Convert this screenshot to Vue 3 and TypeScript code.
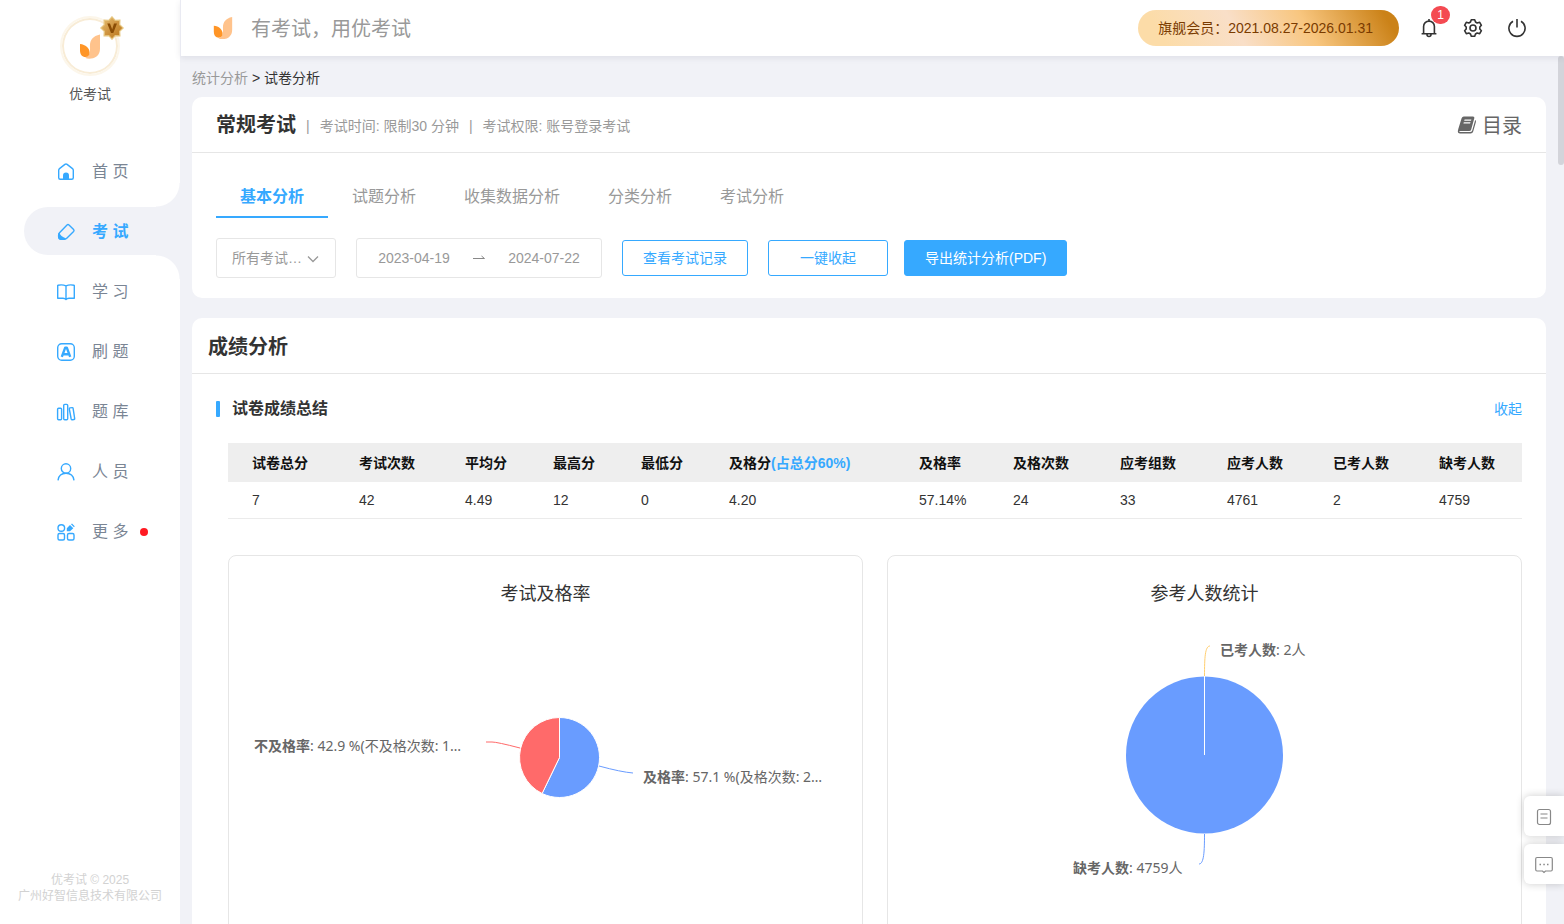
<script setup lang="ts">
import { ref } from 'vue'

interface NavItem {
  key: string
  label: string
  dot?: boolean
}

interface Column {
  title: string
  note?: string
  value: string
  width: number
}

const navItems: NavItem[] = [
  { key: 'home', label: '首 页' },
  { key: 'exam', label: '考 试' },
  { key: 'study', label: '学 习' },
  { key: 'practice', label: '刷 题' },
  { key: 'bank', label: '题 库' },
  { key: 'people', label: '人 员' },
  { key: 'more', label: '更 多', dot: true },
]
const activeNav = ref('exam')

const tabs = ['基本分析', '试题分析', '收集数据分析', '分类分析', '考试分析']
const activeTab = ref('基本分析')

const scope = ref('all')
const startDate = ref('2023-04-19')
const endDate = ref('2024-07-22')

const columns: Column[] = [
  { title: '试卷总分', value: '7', width: 107 },
  { title: '考试次数', value: '42', width: 106 },
  { title: '平均分', value: '4.49', width: 88 },
  { title: '最高分', value: '12', width: 88 },
  { title: '最低分', value: '0', width: 88 },
  { title: '及格分', note: '(占总分60%)', value: '4.20', width: 190 },
  { title: '及格率', value: '57.14%', width: 94 },
  { title: '及格次数', value: '24', width: 107 },
  { title: '应考组数', value: '33', width: 107 },
  { title: '应考人数', value: '4761', width: 106 },
  { title: '已考人数', value: '2', width: 106 },
  { title: '缺考人数', value: '4759', width: 107 },
]
</script>

<template>
  <div class="page">
    <aside class="sidebar">
      <div class="profile">
        <div class="avatar">
          <svg class="avatar-logo" viewBox="0 0 20 24" aria-hidden="true">
            <path d="M20 0C12.500 1.500 9.500 6 10 13C10.300 18 9 22 5 23.300C8 24.800 13 24.500 16.500 22C19 20 20 17.500 20 14Z" fill="#ffc38c" />
            <path d="M0 9.500C5.500 10 9.500 13.500 9.500 18C9.500 20.800 8 22.500 5.500 22.500C2 22.500 0 19.800 0 16Z" fill="#ff9526" />
          </svg>
          <svg class="medal" viewBox="0 0 24 24" aria-hidden="true">
            <defs>
              <linearGradient id="medalFill" x1="0" y1="0" x2="1" y2="1">
                <stop offset="0" stop-color="#e9c47a" />
                <stop offset="0.500" stop-color="#cf9440" />
                <stop offset="1" stop-color="#b87518" />
              </linearGradient>
            </defs>
            <path d="M12 .8L15.200 4.300L19.900 4.100L19.700 8.800L23.200 12L19.700 15.200L19.900 19.900L15.200 19.700L12 23.200L8.800 19.700L4.100 19.900L4.300 15.200L.8 12L4.300 8.800L4.100 4.100L8.800 4.300Z" fill="url(#medalFill)" stroke="#e6c680" stroke-width="1.200" />
            <path d="M7.300 7.500H10L12.200 13.500L14 7.500H17L13.300 17H11Z" fill="#8a4d05" />
          </svg>
        </div>
        <div class="profile-name">优考试</div>
      </div>

      <nav class="nav">
        <a
          v-for="item in navItems"
          :key="item.key"
          href="#"
          class="nav-item"
          :class="{ active: item.key === activeNav }"
          @click.prevent="activeNav = item.key"
        >
          <svg class="nav-icon" viewBox="0 0 20 20" aria-hidden="true">
            <template v-if="item.key === 'home'">
              <path d="M2.700 8.200Q2.700 7.200 3.500 6.600L8.900 2.400Q10 1.600 11.100 2.400L16.500 6.600Q17.300 7.200 17.300 8.200V15.800Q17.300 17.300 15.800 17.300H4.200Q2.700 17.300 2.700 15.800Z" />
              <path class="solid" d="M7 18V13.500A3 3 0 0 1 13 13.500V18Z" />
            </template>
            <template v-else-if="item.key === 'exam'">
              <path d="M11 2.900Q12 2 13 2.900L17.600 7.500Q18.500 8.500 17.600 9.500L10.500 16.500Q9.500 17.400 7.800 17.400H5.500Q2.700 17.400 2.600 14.500V13.500Q2.500 11.800 3.500 10.700Z" />
              <path class="solid" d="M3.300 10.500Q4.300 14.300 10.200 16.500L8.500 18H5Q2 17.500 2 14.500V12Z" />
            </template>
            <template v-else-if="item.key === 'study'">
              <path d="M10 3.800Q6.500 2.300 2 3.200Q1.700 3.200 1.700 3.600V16.200H7Q9 16.300 10 17.500Q11 16.300 13 16.200H18.300V3.600Q18.300 3.200 18 3.200Q13.500 2.300 10 3.800ZM10 3.800V17.500" />
            </template>
            <template v-else-if="item.key === 'practice'">
              <rect x="1.700" y="1.700" width="16.600" height="16.600" rx="4" />
              <path class="thick" d="M5.800 14.800L9.200 5.700H10.800L14.200 14.800M7 12.300H13" />
            </template>
            <template v-else-if="item.key === 'bank'">
              <rect x="1.600" y="6.200" width="4" height="11.500" rx="1" />
              <rect x="7.700" y="2.400" width="4" height="15.300" rx="1" />
              <path d="M14 5.900L16.200 5.600Q17 5.500 17.100 6.300L18.700 16.600Q18.800 17.400 18 17.500L16.300 17.700Q15.400 17.800 15.200 17L13.300 7Q13.200 6 14 5.900Z" />
            </template>
            <template v-else-if="item.key === 'people'">
              <circle cx="10" cy="6.500" r="4.700" />
              <path d="M2 18.300Q3 11.300 10 11.300T18 18.300" />
            </template>
            <template v-else>
              <circle cx="5.300" cy="6" r="3.300" />
              <rect x="2" y="11.500" width="6.500" height="6.500" rx="1.500" />
              <rect x="11.500" y="11.500" width="6.500" height="6.500" rx="1.500" />
              <path class="solid" d="M10.800 6.200L14 3L17.300 6.200L14 9.300H10.800ZM15 2.200L16 1.500L18.700 4.200L18 5.300Z" />
            </template>
          </svg>
          <span>{{ item.label }}</span>
          <i v-if="item.dot" class="nav-dot"></i>
        </a>
      </nav>

      <footer class="copyright">
        <div>优考试 © 2025</div>
        <div>广州好智信息技术有限公司</div>
      </footer>
    </aside>

    <div class="main">
      <header class="topbar">
        <svg class="brand" viewBox="0 0 20 24" aria-hidden="true">
          <path d="M20 0C12.500 1.500 9.500 6 10 13C10.300 18 9 22 5 23.300C8 24.800 13 24.500 16.500 22C19 20 20 17.500 20 14Z" fill="#ffc38c" />
          <path d="M0 9.500C5.500 10 9.500 13.500 9.500 18C9.500 20.800 8 22.500 5.500 22.500C2 22.500 0 19.800 0 16Z" fill="#ff9526" />
        </svg>
        <span class="slogan">有考试，用优考试</span>
        <span class="member">旗舰会员：2021.08.27-2026.01.31</span>
        <div class="tools">
          <button type="button" class="tool" aria-label="消息">
            <svg viewBox="0 0 20 20" aria-hidden="true">
              <path d="M10 1V3M4.600 15.300V8.500A5.400 5.400 0 0 1 15.400 8.500V15.300M2.600 15.800H17.400M8 16.500A2 2 0 0 0 12 16.500" />
            </svg>
            <span class="count">1</span>
          </button>
          <button type="button" class="tool" aria-label="设置">
            <svg viewBox="0 0 20 20" aria-hidden="true">
              <path d="M8.300 1.700H11.700L12.500 4L14.200 5L16.700 4.300L18.400 7.300L16.800 9V11L18.400 12.700L16.700 15.700L14.200 15L12.500 16L11.700 18.300H8.300L7.500 16L5.800 15L3.300 15.700L1.600 12.700L3.200 11V9L1.600 7.300L3.300 4.300L5.800 5L7.500 4Z" />
              <circle cx="10" cy="10" r="3" />
            </svg>
          </button>
          <button type="button" class="tool" aria-label="退出">
            <svg viewBox="0 0 20 20" aria-hidden="true">
              <path d="M10 1V9.500M6 3.200A8.100 8.100 0 1 0 14 3.200" />
            </svg>
          </button>
        </div>
      </header>

      <div class="body">
        <main class="content">
          <div class="crumbs">
            <a href="#">统计分析</a> &gt; <span>试卷分析</span>
          </div>

          <section class="card">
            <div class="card-head exam-head">
              <h1>常规考试</h1>
              <span class="meta">|</span>
              <span class="meta">考试时间: 限制30 分钟</span>
              <span class="meta">|</span>
              <span class="meta">考试权限: 账号登录考试</span>
              <a href="#" class="catalog">
                <svg viewBox="0 0 20 20" aria-hidden="true">
                  <path fill-rule="evenodd" d="M6.800 1.500H16Q17.800 1.500 17.300 3.200L14.200 14.500Q13.800 16 12.200 16H3.500Q2.300 16 2.200 17H13Q14.700 17 15.200 15.500L18.200 5Q19.300 5.500 18.900 7L16.200 16.500Q15.600 18.500 13.600 18.500H3Q.8 18.500 .8 16.500Q.9 15.500 1.300 14L4.600 3.200Q5.200 1.500 6.800 1.500ZM7.600 4.500L7.200 5.700H14L14.400 4.500ZM6.800 7.300L6.400 8.500H13.100L13.500 7.300Z" />
                </svg>
                <span>目录</span>
              </a>
            </div>

            <div class="tabs" role="tablist">
              <button
                v-for="tab in tabs"
                :key="tab"
                type="button"
                role="tab"
                class="tab"
                :class="{ active: tab === activeTab }"
                :aria-selected="tab === activeTab"
                @click="activeTab = tab"
              >{{ tab }}</button>
            </div>

            <div class="filters">
              <div class="select-box">
                <select v-model="scope" aria-label="考试范围">
                  <option value="all">所有考试…</option>
                </select>
                <svg class="chevron" viewBox="0 0 12 12" aria-hidden="true">
                  <path d="M1 3.500L6 8.500L11 3.500" />
                </svg>
              </div>
              <div class="range">
                <input v-model="startDate" type="text" aria-label="开始日期" />
                <svg class="arrow" viewBox="0 0 12 6" aria-hidden="true">
                  <path d="M0 3.500H11.500L8.500 1" />
                </svg>
                <input v-model="endDate" type="text" aria-label="结束日期" />
              </div>
              <button type="button" class="btn">查看考试记录</button>
              <div class="btn-group">
                <button type="button" class="btn wide">一键收起</button>
                <button type="button" class="btn primary">导出统计分析(PDF)</button>
              </div>
            </div>
          </section>

          <section class="card">
            <div class="card-head score-head">
              <h2>成绩分析</h2>
            </div>

            <div class="block">
              <div class="block-head">
                <i class="mark"></i>
                <h3>试卷成绩总结</h3>
                <button type="button" class="fold">收起</button>
              </div>

              <div class="block-body">
                <table>
                  <colgroup>
                    <col v-for="c in columns" :key="c.title" :style="{ width: c.width + 'px' }" />
                  </colgroup>
                  <thead>
                    <tr>
                      <th v-for="c in columns" :key="c.title" scope="col">{{ c.title }}<span v-if="c.note">{{ c.note }}</span></th>
                    </tr>
                  </thead>
                  <tbody>
                    <tr>
                      <td v-for="c in columns" :key="c.title">{{ c.value }}</td>
                    </tr>
                  </tbody>
                </table>

                <div class="charts">
                  <figure class="chart">
                    <figcaption>考试及格率</figcaption>
                    <svg viewBox="0 0 633 360" role="img" aria-label="考试及格率">
                      <path class="blue slice" d="M330.500 149.500V109.500A40 40 0 1 1 313.100 185.500Z" />
                      <path class="red slice" d="M330.500 149.500L313.100 185.500A40 40 0 0 1 330.500 109.500Z" />
                      <path class="lead red-line" d="M291 140Q268 134 263 134H257" />
                      <path class="lead blue-line" d="M370 158Q392 164 404 165" />
                      <text x="25" y="143"><tspan class="strong">不及格率</tspan>: 42.9 %(不及格次数: 1…</text>
                      <text x="414" y="174"><tspan class="strong">及格率</tspan>: 57.1 %(及格次数: 2…</text>
                    </svg>
                  </figure>
                  <figure class="chart">
                    <figcaption>参考人数统计</figcaption>
                    <svg viewBox="0 0 633 360" role="img" aria-label="参考人数统计">
                      <circle class="blue" cx="316.500" cy="147" r="78.500" />
                      <path class="divider" d="M316.500 147V68" />
                      <path class="lead gold-line" d="M316.500 68C316.500 50 317 38 322 38" />
                      <path class="lead blue-line" d="M316.500 226C316.500 243 316 256 311 256" />
                      <text x="332" y="47"><tspan class="strong">已考人数</tspan>: 2人</text>
                      <text x="185" y="265"><tspan class="strong">缺考人数</tspan>: 4759人</text>
                    </svg>
                  </figure>
                </div>
              </div>
            </div>
          </section>
        </main>
        <div class="scroll-track"><div class="scroll-thumb"></div></div>
      </div>
    </div>

    <div class="float-tools">
      <button type="button" aria-label="文档">
        <svg viewBox="0 0 20 20" aria-hidden="true">
          <rect x="3.500" y="2.500" width="13" height="15" rx="2" />
          <path d="M6.500 7H13.500M6.500 11H13.500" />
        </svg>
      </button>
      <button type="button" aria-label="反馈">
        <svg viewBox="0 0 20 20" aria-hidden="true">
          <path d="M3 2.500H17Q18.300 2.500 18.300 4V14.500Q18.300 16 17 16H11.500L10 17.500L8.500 16H3Q1.700 16 1.700 14.500V4Q1.700 2.500 3 2.500Z" />
          <path class="dots" d="M5.500 9.500H7M9.300 9.500H10.800M13 9.500H14.500" />
        </svg>
      </button>
    </div>
  </div>
</template>

<style>
body {
  margin: 0;
  background: #f1f2f7;
}
</style>

<style scoped>
.page {
  display: flex;
  height: 100vh;
  overflow: hidden;
  background: #f1f2f7;
  color: #333;
  font-family: "Liberation Sans", "Noto Sans CJK SC", sans-serif;
  font-size: 14px;
  line-height: 20px;
}

.page * {
  box-sizing: border-box;
}

button,
input,
select {
  font: inherit;
  margin: 0;
  padding: 0;
  border: 0;
  background: none;
  color: inherit;
}

button {
  cursor: pointer;
}

a {
  color: inherit;
  text-decoration: none;
}

h1,
h2,
h3 {
  margin: 0;
}

svg {
  display: block;
}

/* Sidebar */
.sidebar {
  display: flex;
  flex-direction: column;
  flex: none;
  width: 180px;
  background: #fff;
}

.profile {
  display: flex;
  flex-direction: column;
  align-items: center;
  gap: 8px;
  padding-top: 16px;
}

.avatar {
  position: relative;
  display: flex;
  align-items: center;
  justify-content: center;
  width: 60px;
  height: 60px;
  border: 2px solid #fcf6ea;
  border-radius: 50%;
  box-shadow: inset 0 0 0 2px #f8ecd6;
}

.avatar-logo {
  width: 20px;
  height: 25px;
}

.medal {
  position: absolute;
  top: -2px;
  right: -6px;
  width: 24px;
  height: 24px;
}

.profile-name {
  color: #555;
}

.nav {
  display: flex;
  flex-direction: column;
  gap: 12px;
  padding: 43px 0 0 24px;
}

.nav-item {
  position: relative;
  display: flex;
  align-items: center;
  height: 48px;
  padding: 2px 0 0 32px;
  border-radius: 24px 0 0 24px;
  color: #7a8594;
  font-size: 16px;
}

.nav-item.active {
  background: #f1f2f7;
  color: #36a9ff;
  font-weight: bold;
}

.nav-item.active::before,
.nav-item.active::after {
  content: "";
  position: absolute;
  right: 0;
  width: 24px;
  height: 24px;
}

.nav-item.active::before {
  bottom: 100%;
  background: radial-gradient(circle at 0 0, #fff 23px, #f1f2f7 24px);
}

.nav-item.active::after {
  top: 100%;
  background: radial-gradient(circle at 0 100%, #fff 23px, #f1f2f7 24px);
}

.nav-icon {
  width: 20px;
  height: 20px;
  margin-right: 16px;
  fill: none;
  stroke: #36a9ff;
  stroke-width: 1.4;
  stroke-linejoin: round;
}

.nav-icon .solid {
  fill: #36a9ff;
  stroke: none;
}

.nav-icon .thick {
  stroke-width: 2.4;
}

.nav-dot {
  width: 8px;
  height: 8px;
  margin-left: 12px;
  border-radius: 50%;
  background: #ff1a22;
}

.copyright {
  margin-top: auto;
  padding-bottom: 20px;
  color: #d2d2d2;
  font-size: 12px;
  line-height: 16px;
  text-align: center;
}

/* Top bar */
.main {
  display: flex;
  flex-direction: column;
  flex: 1;
  min-width: 0;
}

.topbar {
  position: relative;
  display: flex;
  align-items: center;
  flex: none;
  height: 56px;
  padding: 0 37px 0 32px;
  border-left: 1px solid #e9eaf2;
  background: #fff;
  box-shadow: 0 2px 6px rgba(60, 60, 90, 0.1);
}

.brand {
  width: 20px;
  height: 22px;
  margin-right: 18px;
}

.slogan {
  padding-top: 2px;
  color: #999;
  font-size: 20px;
  line-height: 28px;
}

.member {
  margin-left: auto;
  padding: 0 26px 0 20px;
  border-radius: 18px;
  background: linear-gradient(60deg, #fcdca8 10%, #f9dfc8 38%, #f8c67f 64%, #cb8218 94%);
  color: #7a3b00;
  line-height: 36px;
  white-space: nowrap;
}

.tools {
  display: flex;
  gap: 24px;
  margin-left: 20px;
}

.tool {
  position: relative;
  width: 20px;
  height: 20px;
}

.tool svg {
  width: 20px;
  height: 20px;
  fill: none;
  stroke: #333;
  stroke-width: 1.6;
  stroke-linejoin: round;
}

.count {
  position: absolute;
  top: -12px;
  left: 12px;
  min-width: 19px;
  height: 18px;
  border-radius: 9px;
  background: #f44a52;
  color: #fff;
  font-size: 12px;
  line-height: 18px;
  text-align: center;
}

/* Scrolling body */
.body {
  display: flex;
  flex: 1;
  min-height: 0;
}

.content {
  flex: 1;
  min-width: 0;
  padding: 0 12px;
  overflow: hidden;
}

.scroll-track {
  flex: none;
  width: 6px;
}

.scroll-thumb {
  height: 109px;
  border-radius: 3px;
  background: #d3d4da;
}

.crumbs {
  padding: 12px 0 9px;
}

.crumbs a {
  color: #999;
}

.card {
  margin-bottom: 20px;
  border-radius: 10px;
  background: #fff;
}

.card-head {
  display: flex;
  align-items: center;
  height: 56px;
  border-bottom: 1px solid #e6e6e6;
}

.card-head h1,
.card-head h2 {
  font-size: 20px;
  line-height: 28px;
}

.exam-head {
  padding: 0 24px;
}

.score-head {
  padding: 2px 16px 0;
}

.meta {
  margin-left: 10px;
  padding-top: 2px;
  color: #999;
}

.catalog {
  display: flex;
  align-items: center;
  gap: 5px;
  margin-left: auto;
  color: #666;
  font-size: 20px;
  line-height: 28px;
}

.catalog svg {
  width: 20px;
  height: 20px;
  fill: #666;
}

.catalog span {
  padding-top: 2px;
}

.tabs {
  display: flex;
  padding: 23px 24px 0;
}

.tab {
  height: 42px;
  padding: 2px 24px 0;
  border-bottom: 2px solid transparent;
  color: #999;
  font-size: 16px;
  line-height: 24px;
}

.tab.active {
  border-bottom-color: #36a9ff;
  color: #36a9ff;
  font-weight: bold;
}

.filters {
  display: flex;
  align-items: center;
  gap: 20px;
  padding: 20px 24px;
}

.select-box {
  position: relative;
  width: 120px;
}

.select-box select {
  width: 100%;
  height: 40px;
  padding: 0 28px 0 15px;
  border: 1px solid #e6e6e6;
  border-radius: 3px;
  appearance: none;
  color: #999;
}

.chevron {
  position: absolute;
  top: 15px;
  right: 17px;
  width: 12px;
  height: 12px;
  fill: none;
  stroke: #999;
  stroke-width: 1.3;
  pointer-events: none;
}

.range {
  display: flex;
  align-items: center;
  justify-content: space-between;
  width: 246px;
  height: 40px;
  padding: 0 20px;
  border: 1px solid #e6e6e6;
  border-radius: 3px;
}

.range input {
  width: 74px;
  color: #999;
  text-align: center;
}

.arrow {
  width: 12px;
  height: 6px;
  fill: none;
  stroke: #888;
}

.btn {
  height: 36px;
  padding: 0 20px;
  border: 1px solid #36a9ff;
  border-radius: 3px;
  color: #36a9ff;
  white-space: nowrap;
}

.btn.wide {
  width: 120px;
}

.btn.primary {
  background: #36a9ff;
  color: #fff;
}

.btn-group {
  display: flex;
  gap: 16px;
}

/* Score summary */
.block {
  padding: 24px;
}

.block-head {
  display: flex;
  align-items: center;
  height: 22px;
}

.mark {
  width: 4px;
  height: 16px;
  margin-right: 12px;
  border-radius: 1px;
  background: #36a9ff;
}

.block-head h3 {
  font-size: 16px;
  line-height: 24px;
}

.fold {
  margin-left: auto;
  color: #36a9ff;
}

.block-body {
  padding: 23px 0 0 12px;
}

table {
  width: 100%;
  table-layout: fixed;
  border-collapse: separate;
  border-spacing: 0;
}

th,
td {
  padding: 0 0 0 24px;
  text-align: left;
  white-space: nowrap;
}

th {
  height: 39px;
  background: #eee;
  color: #111;
  font-weight: bold;
}

th span {
  color: #36a9ff;
}

td {
  height: 37px;
  border-bottom: 1px solid #ebebeb;
}

.charts {
  display: grid;
  grid-template-columns: 1fr 1fr;
  gap: 24px;
  margin-top: 36px;
}

.chart {
  margin: 0;
  padding-top: 24px;
  border: 1px solid #e6e6e6;
  border-radius: 8px;
}

.chart figcaption {
  font-size: 18px;
  line-height: 28px;
  text-align: center;
}

.chart svg {
  width: 100%;
  height: 360px;
}

.chart text {
  fill: #666;
  font-family: "Noto Sans", "Noto Sans CJK SC", sans-serif;
  font-size: 14px;
}

.chart .strong {
  font-weight: bold;
}

.blue {
  fill: #699cff;
}

.red {
  fill: #ff6a6a;
}

.slice {
  stroke: #fff;
  stroke-width: 1;
}

.divider {
  fill: none;
  stroke: #fff;
}

.lead {
  fill: none;
}

.red-line {
  stroke: #ff6a6a;
}

.blue-line {
  stroke: #699cff;
}

.gold-line {
  stroke: #ffcf70;
}

/* Floating shortcuts */
.float-tools {
  position: fixed;
  right: 0;
  bottom: 40px;
  display: flex;
  flex-direction: column;
  gap: 8px;
}

.float-tools button {
  display: flex;
  align-items: center;
  justify-content: center;
  width: 40px;
  height: 40px;
  padding-top: 2px;
  border-radius: 6px 0 0 6px;
  background: #fff;
  box-shadow: 0 0 8px rgba(0, 0, 0, 0.2);
}

.float-tools svg {
  width: 20px;
  height: 20px;
  fill: none;
  stroke: #888;
  stroke-width: 1.2;
}

.float-tools .dots {
  stroke-width: 1.5;
}
</style>
